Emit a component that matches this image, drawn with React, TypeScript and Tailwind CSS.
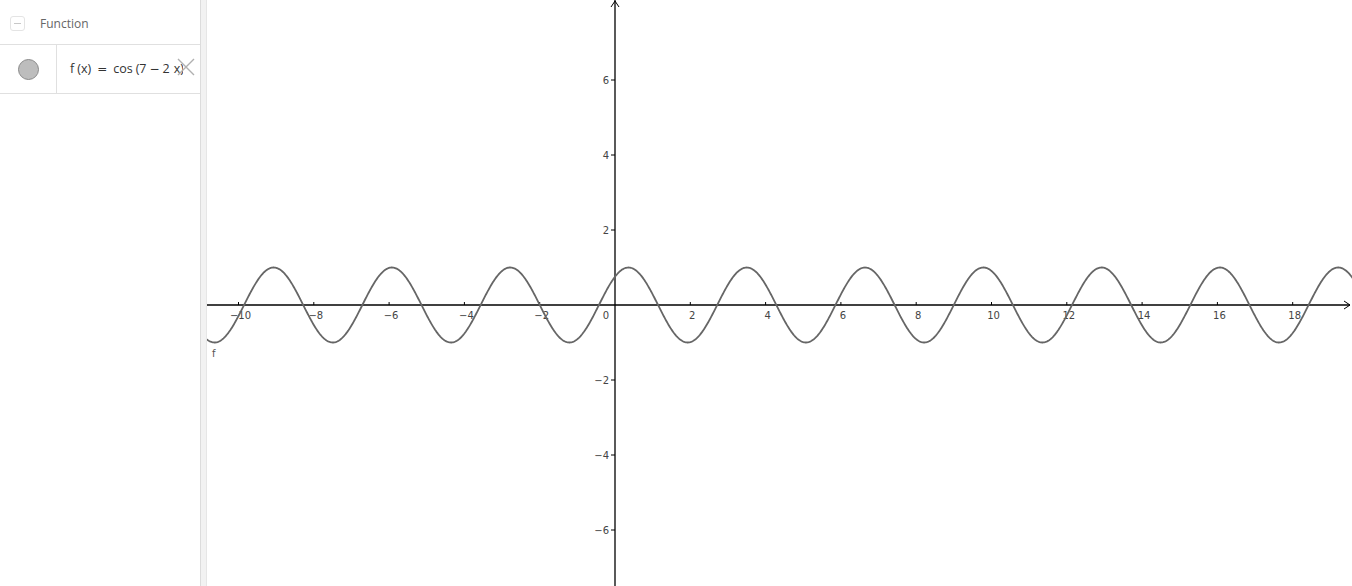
import React from 'react';

const OX = 408; // y axis, local to plot (615 on page)
const OY = 305;
const SX = 37.65;
const SY = 37.5;
const W = 1145;
const H = 586;

const px = (x: number) => OX + x * SX;
const py = (y: number) => OY - y * SY;

function curvePath() {
  const pts: string[] = [];
  for (let x = -11; x <= 19.6; x += 0.02) {
    const y = Math.cos(7 - 2 * x);
    pts.push(`${px(x).toFixed(2)},${py(y).toFixed(2)}`);
  }
  return 'M' + pts.join('L');
}

const xTicks = [-10, -8, -6, -4, -2, 2, 4, 6, 8, 10, 12, 14, 16, 18];
const yTicks = [6, 4, 2, -2, -4, -6];
const fmt = (n: number) => (n < 0 ? '\u2212' + Math.abs(n) : String(n));

function Graph() {
  return (
    <svg width={W} height={H} className="block" style={{ fontFamily: '"DejaVu Sans", sans-serif' }}>
      {/* axes */}
      <line x1={0} y1={OY} x2={W - 2} y2={OY} stroke="#000" strokeWidth={1.3} />
      <line x1={OX} y1={0} x2={OX} y2={H} stroke="#000" strokeWidth={1.3} />
      <path d={`M${W - 8},${OY - 4} L${W - 2},${OY} L${W - 8},${OY + 4}`} fill="none" stroke="#000" strokeWidth={1} />
      <path d={`M${OX - 4},7 L${OX},1 L${OX + 4},7`} fill="none" stroke="#000" strokeWidth={1} />

      {xTicks.map(t => (
        <g key={t}>
          <line x1={px(t)} y1={OY - 3} x2={px(t)} y2={OY} stroke="#000" strokeWidth={1} />
          <text x={px(t) + 2} y={OY + 14} fontSize={10} fill="#444" textAnchor="middle">{fmt(t)}</text>
        </g>
      ))}
      <text x={OX - 9} y={OY + 14} fontSize={10} fill="#444" textAnchor="middle">0</text>

      {yTicks.map(t => (
        <g key={t}>
          <line x1={OX - 4} y1={py(t)} x2={OX} y2={py(t)} stroke="#000" strokeWidth={1} />
          <text x={OX - 6} y={py(t) + 3.5} fontSize={10} fill="#444" textAnchor="end">{fmt(t)}</text>
        </g>
      ))}

      <path d={curvePath()} fill="none" stroke="#666" strokeWidth={1.8} />
      <text x={5} y={357} fontSize={10} fill="#555">f</text>
    </svg>
  );
}

export default function App() {
  return (
    <div className="flex w-[1352px] h-[586px] overflow-hidden bg-white" style={{ fontFamily: '"Open Sans", sans-serif' }}>
      <aside className="w-[200px] shrink-0 flex flex-col">
        <div className="h-[45px] border-b border-[#e0e0e0] flex items-center pt-[3px]">
          <div className="ml-[10px] w-[15px] h-[15px] rounded-[3px] border border-[#e4e4e4] flex items-center justify-center">
            <div className="w-[7px] h-px bg-[#c8c8c8]" />
          </div>
          <span className="ml-[15px] text-[12px] text-[#666]">Function</span>
        </div>
        <div className="h-[49px] border-b border-[#e0e0e0] flex relative">
          <div className="w-[57px] border-r border-[#e0e0e0] flex items-center justify-center">
            <div className="w-[21px] h-[21px] rounded-full bg-[#bdbdbd] border border-[#8a8a8a]" />
          </div>
          <div className="flex items-center pl-[13px] w-[126px] overflow-hidden whitespace-nowrap text-[12.5px] text-[#333]">
            <span>f</span>
            <span className="ml-[3px]">(x)</span>
            <span className="ml-[6px] font-['DejaVu_Sans'] text-[12px]">=</span>
            <span className="ml-[6px]">cos</span>
            <span className="ml-[3px]">(7</span>
            <span className="ml-[3px] font-['DejaVu_Sans'] text-[12px]">−</span>
            <span className="ml-[3px]">2</span>
            <span className="ml-[4px]">x)</span>
          </div>
          <svg className="absolute left-[177px] top-[13px]" width={18} height={18} viewBox="0 0 18 18">
            <path d="M1,1 L17,17 M17,1 L1,17" stroke="#b0b0b0" strokeWidth={1.4} fill="none" />
          </svg>
        </div>
      </aside>
      <div className="w-[7px] shrink-0 bg-[#f2f2f2] border-l border-[#dcdcdc] border-r border-r-[#e6e6e6]" />
      <main className="flex-1 relative">
        <Graph />
      </main>
    </div>
  );
}
